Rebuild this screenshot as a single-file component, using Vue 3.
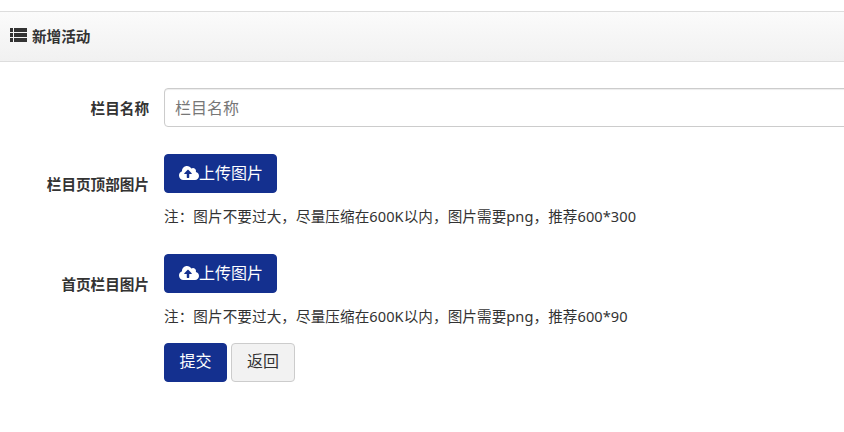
<script setup>
const rows = [
  { label: '栏目页顶部图片', note: '注：图片不要过大，尽量压缩在600K以内，图片需要png，推荐600*300' },
  { label: '首页栏目图片', note: '注：图片不要过大，尽量压缩在600K以内，图片需要png，推荐600*90' }
]
</script>

<template>
  <div class="page">
    <div class="head">
      <svg class="list" viewBox="0 0 17 14" width="17" height="14"><path fill="#333" d="M0 0h3v4H0zM0 5h3v4H0zM0 10h3v4H0zM4 0h13v4H4zM4 5h13v4H4zM4 10h13v4H4z"/></svg>
      <span>新增活动</span>
    </div>
    <div class="form">
      <div class="row first">
        <label>栏目名称</label>
        <input class="input" placeholder="栏目名称" />
      </div>
      <div v-for="r in rows" :key="r.label" class="row upload">
        <label>{{ r.label }}</label>
        <div class="col">
          <button class="btn primary up">
            <svg class="cloud" viewBox="0 0 640 512" width="20" height="16"><path fill="#fff" d="M537.6 226.6c4.1-10.7 6.4-22.4 6.4-34.6 0-53-43-96-96-96-19.7 0-38.1 6-53.3 16.2C367 64.2 315.3 32 256 32c-88.4 0-160 71.6-160 160 0 2.7.1 5.4.2 8.1C40.2 219.8 0 273.2 0 336c0 79.5 64.5 144 144 144h368c70.7 0 128-57.3 128-128 0-61.9-44-113.6-102.4-125.4zM393.4 288H328v112c0 8.8-7.2 16-16 16h-48c-8.8 0-16-7.2-16-16V288h-65.4c-14.3 0-21.4-17.2-11.3-27.3l105.4-105.4c6.2-6.2 16.4-6.2 22.6 0l105.4 105.4c10.1 10.1 2.9 27.3-11.3 27.3z"/></svg>
            <span>上传图片</span>
          </button>
          <p class="note">{{ r.note }}</p>
        </div>
      </div>
      <div class="actions">
        <button class="btn primary submit">提交</button>
        <button class="btn ghost">返回</button>
      </div>
    </div>
  </div>
</template>

<style>
html, body { margin: 0; background: #fff; overflow: hidden; }
</style>

<style scoped>
.page { width: 844px; height: 432px; padding-top: 11px; box-sizing: border-box; font-family: "Noto Sans", "Noto Sans CJK SC", sans-serif; color: #333; overflow: hidden; }
.head { height: 51px; box-sizing: border-box; display: flex; align-items: center; gap: 5px; padding: 0 0 3px 10px; border-top: 1px solid #ddd; border-bottom: 1px solid #ddd; background: linear-gradient(#fbfbfb, #f1f1f1); font-size: 14.6px; font-weight: 700; }
.form { padding-top: 26px; }
.row { display: flex; }
.row label { width: 149px; text-align: right; font-size: 14.6px; line-height: 20px; font-weight: 700; flex: none; }
.first { align-items: center; }
.input { margin-left: 15px; width: 700px; height: 39px; box-sizing: border-box; flex: none; border: 1px solid #ccc; border-radius: 4px 0 0 4px; box-shadow: inset 0 1px 1px rgba(0, 0, 0, .075); padding: 1px 10px 0; font: 16px "Noto Sans", "Noto Sans CJK SC", sans-serif; outline: none; }
.input::placeholder { color: #777; }
.upload { margin-top: 27px; height: 73px; }
.upload + .upload { margin-top: 27px; }
.upload label { padding-top: 20px; }
.col { margin-left: 15px; }
.btn { height: 39px; border-radius: 4px; font: 16px "Noto Sans", "Noto Sans CJK SC", sans-serif; line-height: 20px; padding: 0 15px 3px; box-sizing: border-box; }
.primary { background: #14308f; border: 1px solid #14308f; color: #fff; }
.up { display: flex; align-items: center; width: 113px; padding: 0 0 2px 14px; white-space: nowrap; }
.cloud { flex: none; }
.note { margin: 13px 0 0; font-size: 14.6px; line-height: 20px; letter-spacing: .07px; white-space: nowrap; }
.actions { margin: 16px 0 0 164px; display: flex; gap: 4px; }
.submit { width: 63px; padding: 0 0 3px; }
.ghost { background: #f2f2f2; border: 1px solid #ccc; color: #333; }
</style>
